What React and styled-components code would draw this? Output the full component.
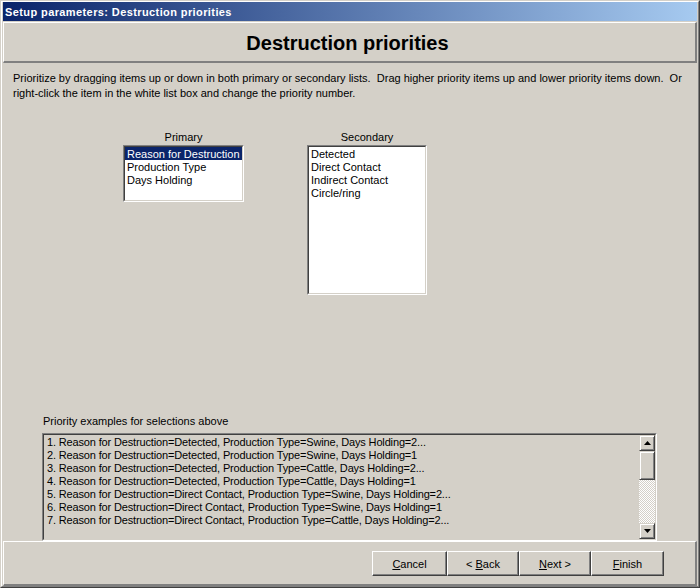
import React from "react";
import styled, { createGlobalStyle } from "styled-components";

const GlobalStyle = createGlobalStyle`
  html, body {
    margin: 0;
    padding: 0;
    background: #d4d0c8;
  }
  body {
    font-family: "Liberation Sans", Arial, sans-serif;
    font-size: 11px;
    color: #000;
  }
`;

const Window = styled.div`
  width: 700px;
  height: 588px;
  box-sizing: border-box;
  border-style: solid;
  border-width: 1px;
  border-color: #d4d0c8 #404040 #404040 #d4d0c8;
`;

const WindowInner = styled.div`
  height: 100%;
  box-sizing: border-box;
  border-style: solid;
  border-width: 1px;
  border-color: #fff #808080 #808080 #fff;
  padding: 0 1px 0 1px;
  display: flex;
  flex-direction: column;
`;

const TitleBar = styled.div`
  height: 19px;
  flex-shrink: 0;
  display: flex;
  align-items: center;
  padding-left: 2px;
  background: linear-gradient(to right, #0a246a, #a6caf0);
  color: #fff;
  font-weight: bold;
  font-size: 11px;
  letter-spacing: 0.4px;
`;

const RaisedPanel = styled.div`
  box-sizing: border-box;
  flex-shrink: 0;
  border-style: solid;
  border-width: 1px 2px 2px 1px;
  border-color: #fff #808080 #808080 #fff;
`;

const Header = styled(RaisedPanel)`
  margin-top: 1px;
  height: 41px;
  display: flex;
  align-items: center;
  justify-content: center;
  font-size: 20px;
  font-weight: bold;
  padding: 3px 4px 0 0;
`;

const Content = styled.div`
  flex: 1;
  display: flex;
  flex-direction: column;
  padding: 8px 0 0 10px;
`;

const Description = styled.p`
  margin: 0;
  line-height: 15px;
  white-space: nowrap;
`;

const ListsRow = styled.div`
  display: flex;
  gap: 63px;
  margin: 29px 0 0 110px;
`;

const ListColumn = styled.div`
  display: flex;
  flex-direction: column;
  width: ${(p) => p.$width}px;
`;

const ListLabel = styled.div`
  height: 13px;
  line-height: 13px;
  padding-top: 1px;
  box-sizing: border-box;
  text-align: center;
  margin-bottom: 2px;
`;

const ListBox = styled.div`
  box-sizing: border-box;
  width: ${(p) => p.$width}px;
  height: ${(p) => p.$height}px;
  border-style: solid;
  border-width: 1px;
  border-color: #808080 #fff #fff #808080;
  flex-shrink: 0;
`;

const ListBoxInner = styled.div`
  height: 100%;
  box-sizing: border-box;
  border-style: solid;
  border-width: 1px;
  border-color: #404040 #d4d0c8 #d4d0c8 #404040;
  background: ${(p) => (p.$disabled ? "#d4d0c8" : "#fff")};
  display: flex;
  overflow: hidden;
`;

const Items = styled.div`
  flex: 1;
  display: flex;
  flex-direction: column;
  min-width: 0;
`;

const Item = styled.div`
  box-sizing: border-box;
  height: 13px;
  line-height: 13px;
  padding-top: 1px;
  padding-left: ${(p) => p.$pad || 2}px;
  white-space: nowrap;
  background: ${(p) => (p.$selected ? "#0a246a" : "transparent")};
  color: ${(p) => (p.$selected ? "#fff" : "#000")};
  letter-spacing: ${(p) => (p.$tight ? "-0.15px" : "0")};
`;

const Spacer = styled.div`
  flex: 1;
`;

const ExamplesLabel = styled.div`
  height: 13px;
  line-height: 13px;
  margin-left: 30px;
  margin-bottom: 5px;
`;

const ExamplesBox = styled(ListBox)`
  margin-left: 29px;
`;

const ScrollBar = styled.div`
  width: 16px;
  flex-shrink: 0;
  display: flex;
  flex-direction: column;
  background: repeating-conic-gradient(#fff 0 25%, #d4d0c8 0 50%) 0 0 / 2px 2px;
`;

const ScrollPart = styled.div`
  box-sizing: border-box;
  width: 16px;
  height: ${(p) => p.$height}px;
  background: #d4d0c8;
  border-style: solid;
  border-width: 1px;
  border-color: #d4d0c8 #404040 #404040 #d4d0c8;
  box-shadow: inset 1px 1px 0 #fff, inset -1px -1px 0 #808080;
  display: flex;
  align-items: center;
  justify-content: center;
  flex-shrink: 0;
`;

const Footer = styled(RaisedPanel)`
  height: 45px;
  display: flex;
  align-items: flex-start;
  justify-content: flex-end;
  padding: 9px 31px 0 0;
`;

const Button = styled.button`
  box-sizing: border-box;
  width: ${(p) => p.$width}px;
  height: 25px;
  margin: 0;
  padding: 0;
  background: #d4d0c8;
  font-family: "Liberation Sans", Arial, sans-serif;
  font-size: 11px;
  color: #000;
  border-style: solid;
  border-width: 1px;
  border-color: #fff #404040 #404040 #fff;
  box-shadow: inset -1px -1px 0 #808080;
  u {
    text-decoration: underline;
  }
`;

const Arrow = ({ down }) => (
  <svg width="7" height="4" viewBox="0 0 7 4">
    <path d={down ? "M0 0H7L3.5 4Z" : "M3.5 0L7 4H0Z"} fill="#000" />
  </svg>
);

const primary = ["Reason for Destruction", "Production Type", "Days Holding"];
const secondary = ["Detected", "Direct Contact", "Indirect Contact", "Circle/ring"];
const examples = [
  "1. Reason for Destruction=Detected, Production Type=Swine, Days Holding=2...",
  "2. Reason for Destruction=Detected, Production Type=Swine, Days Holding=1",
  "3. Reason for Destruction=Detected, Production Type=Cattle, Days Holding=2...",
  "4. Reason for Destruction=Detected, Production Type=Cattle, Days Holding=1",
  "5. Reason for Destruction=Direct Contact, Production Type=Swine, Days Holding=2...",
  "6. Reason for Destruction=Direct Contact, Production Type=Swine, Days Holding=1",
  "7. Reason for Destruction=Direct Contact, Production Type=Cattle, Days Holding=2...",
];

export default function App() {
  return (
    <>
      <GlobalStyle />
      <Window>
        <WindowInner>
          <TitleBar>Setup parameters: Destruction priorities</TitleBar>
          <Header>Destruction priorities</Header>
          <Content>
            <Description>
              Prioritize by dragging items up or down in both primary or secondary lists.&nbsp; Drag higher priority items up and lower priority items down.&nbsp; Or
              <br />
              right-click the item in the white list box and change the priority number.
            </Description>
            <ListsRow>
              <ListColumn $width={121}>
                <ListLabel>Primary</ListLabel>
                <ListBox $width={121} $height={57}>
                  <ListBoxInner>
                    <Items>
                      {primary.map((t, i) => (
                        <Item key={t} $selected={i === 0}>{t}</Item>
                      ))}
                    </Items>
                  </ListBoxInner>
                </ListBox>
              </ListColumn>
              <ListColumn $width={120}>
                <ListLabel>Secondary</ListLabel>
                <ListBox $width={120} $height={150}>
                  <ListBoxInner>
                    <Items>
                      {secondary.map((t) => (
                        <Item key={t}>{t}</Item>
                      ))}
                    </Items>
                  </ListBoxInner>
                </ListBox>
              </ListColumn>
            </ListsRow>
            <Spacer />
            <ExamplesLabel>Priority examples for selections above</ExamplesLabel>
            <ExamplesBox $width={615} $height={108}>
              <ListBoxInner $disabled>
                <Items>
                  {examples.map((t) => (
                    <Item key={t} $pad={3} $tight>{t}</Item>
                  ))}
                </Items>
                <ScrollBar>
                  <ScrollPart $height={16}><Arrow /></ScrollPart>
                  <ScrollPart $height={29} />
                  <Spacer />
                  <ScrollPart $height={16}><Arrow down /></ScrollPart>
                </ScrollBar>
              </ListBoxInner>
            </ExamplesBox>
          </Content>
          <Footer>
            <Button $width={75}><u>C</u>ancel</Button>
            <Button $width={72}>&lt; <u>B</u>ack</Button>
            <Button $width={72}><u>N</u>ext &gt;</Button>
            <Button $width={73}><u>F</u>inish</Button>
          </Footer>
        </WindowInner>
      </Window>
    </>
  );
}
